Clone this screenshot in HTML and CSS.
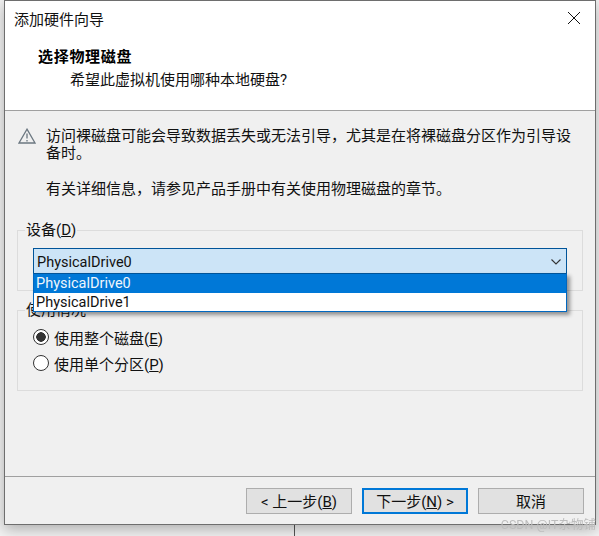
FILE: index.html
```html
<!doctype html>
<html lang="zh-CN">
    <head>
        <meta charset="UTF-8" />
        <title>添加硬件向导</title>
        <link rel="stylesheet" href="styles.css">
    </head>
    <body>
        <div class="behind-line"></div>
        <div class="window">
            <div class="header">
                <div class="title-row">
                    <span class="title">添加硬件向导</span>
                    <svg class="close" width="14" height="14" viewBox="0 0 14 14">
                        <path d="M1 1L13 13M13 1L1 13" stroke="#111" stroke-width="1" fill="none" />
                    </svg>
                </div>
                <h1>选择物理磁盘</h1>
                <p class="subtitle">希望此虚拟机使用哪种本地硬盘?</p>
            </div>

            <div class="content">
                <!-- Warning -->
                <div class="warning">
                    <svg class="warn-icon" width="18" height="16" viewBox="0 0 18 16">
                        <path d="M9 1.2L17 15H1Z" stroke="#6b7780" stroke-width="1.3" fill="none" />
                        <path d="M9 5.5V10.5M9 12V13.5" stroke="#6b7780" stroke-width="1.3" fill="none" />
                    </svg>
                    <p>访问裸磁盘可能会导致数据丢失或无法引导，尤其是在将裸磁盘分区作为引导设备时。</p>
                </div>
                <p class="info">有关详细信息，请参见产品手册中有关使用物理磁盘的章节。</p>

                <!-- Device -->
                <fieldset class="group device">
                    <legend>设备(<u>D</u>)</legend>
                    <div class="combo">
                        <span>PhysicalDrive0</span>
                        <svg width="10" height="6" viewBox="0 0 10 6">
                            <path d="M0.5 0.5L5 5L9.5 0.5" stroke="#333" stroke-width="1.1" fill="none" />
                        </svg>
                        <ul class="combo-list">
                            <li class="selected">PhysicalDrive0</li>
                            <li>PhysicalDrive1</li>
                        </ul>
                    </div>
                </fieldset>

                <!-- Usage -->
                <fieldset class="group usage">
                    <legend>使用情况</legend>
                    <div class="radio-row">
                        <span class="radio checked"></span>
                        <span>使用整个磁盘(<u>E</u>)</span>
                    </div>
                    <div class="radio-row">
                        <span class="radio"></span>
                        <span>使用单个分区(<u>P</u>)</span>
                    </div>
                </fieldset>
            </div>

            <div class="footer">
                <button class="button back">&lt; 上一步(<u>B</u>)</button>
                <button class="button next">下一步(<u>N</u>) &gt;</button>
                <button class="button cancel">取消</button>
            </div>
        </div>
        <div class="watermark">CSDN @IT杂物铺</div>
    </body>
</html>
```

FILE: styles.css
```css
* {
    box-sizing: border-box;
}
html,
body {
    height: 100%;
}
body {
    margin: 0;
    padding: 0 4px 0 4px;
    overflow: hidden;
    position: relative;
    background-color: #f3f3f3;
    font-family: Roboto, "Noto Sans CJK SC", sans-serif;
    font-size: 15px;
    color: #111;
}
p {
    margin: 0;
}
.behind-line {
    position: absolute;
    left: 294px;
    top: 520px;
    width: 1px;
    height: 16px;
    background: #555;
}
.window {
    position: relative;
    width: 592px;
    height: 525px;
    background: #f0f0f0;
    border: 1px solid #6e6e6e;
    box-shadow: 0 4px 14px rgba(0, 0, 0, 0.3);
    display: flex;
    flex-direction: column;
}
.header {
    height: 110px;
    background: white;
    border-bottom: 1px solid #a0a0a0;
    flex: none;
}
.title-row {
    display: flex;
    justify-content: space-between;
    align-items: center;
    height: 20px;
    margin-top: 7px;
    padding: 0 14px 0 9px;
}
h1 {
    margin: 19px 0 0 33px;
    font-size: 15px;
    line-height: 20px;
    letter-spacing: 0.7px;
    color: #000;
}
.subtitle {
    margin: 3px 0 0 65px;
    line-height: 20px;
}
.content {
    flex: 1;
    padding: 17px 12px 0 12px;
}
.warning {
    display: flex;
    gap: 10px;
    padding-left: 1px;
    line-height: 17px;
}
.warn-icon {
    flex: none;
}
.warning p {
    width: 526px;
}
.info {
    margin: 19px 0 0 29px;
    line-height: 17px;
}
.group {
    margin: 0;
    padding: 0;
    border: 1px solid #dcdcdc;
    min-width: 0;
}
.group legend {
    margin-left: -8px;
    padding: 0 1px;
    line-height: 18px;
}
.device {
    margin-top: 23px;
    height: 70px;
    padding: 9px 15px 0 15px;
    position: relative;
}
.combo {
    position: relative;
    height: 26px;
    display: flex;
    align-items: center;
    justify-content: space-between;
    padding: 2px 5px 0 3px;
    background: #cce4f7;
    border: 1px solid #005499;
    font-size: 14.5px;
}
.combo-list {
    position: absolute;
    z-index: 2;
    left: -1px;
    right: -1px;
    top: 24px;
    margin: 0;
    padding: 0;
    list-style: none;
    height: 39px;
    background: white;
    border: 1px solid #0067c0;
    border-top-color: #005499;
    box-shadow: 3px 3px 4px rgba(0, 0, 0, 0.4);
    line-height: 20px;
}
.combo-list li {
    height: 18.5px;
    padding-left: 2px;
}
.combo-list .selected {
    background: #0078d7;
    color: #eef6fc;
}
.usage {
    margin-top: 10px;
    height: 90px;
    padding: 5px 0 0 15px;
}
.radio-row {
    display: flex;
    align-items: center;
    gap: 5px;
    height: 26px;
}
.radio {
    width: 16px;
    height: 16px;
    border: 1px solid #333;
    border-radius: 50%;
    background: white;
    flex: none;
}
.radio.checked {
    background: radial-gradient(circle, #333 0 4.5px, #fff 5px);
}
.footer {
    flex: none;
    height: 48px;
    border-top: 1px solid #a0a0a0;
    display: flex;
    padding: 11px 10px 0 241px;
    gap: 10px;
}
.button {
    width: 106px;
    height: 26px;
    margin: 0;
    padding: 0 0 2px;
    background: #e1e1e1;
    border: 1px solid #adadad;
    font: inherit;
    color: #111;
}
.button.next {
    border: 2px solid #0078d7;
}
.watermark {
    position: absolute;
    right: 3px;
    bottom: 3px;
    font-size: 12.5px;
    color: #bdbdbd;
    filter: blur(0.5px);
}
```
